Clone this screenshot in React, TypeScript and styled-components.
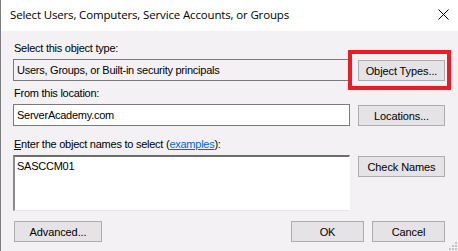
import React from 'react'
import styled, { createGlobalStyle } from 'styled-components'

const GlobalStyle = createGlobalStyle`
  html, body {
    margin: 0;
    padding: 0;
    background: #f4f1f4;
  }
`

const Window = styled.div`
  position: relative;
  width: 458px;
  height: 251px;
  box-sizing: border-box;
  border-left: 1px solid #7d7d7d;
  background: #f4f1f4;
  display: flex;
  flex-direction: column;
  font-family: 'Liberation Sans', Arial, sans-serif;
  font-size: 11px;
  letter-spacing: -0.25px;
  color: #000;
  overflow: hidden;
`

const TitleBar = styled.div`
  height: 31px;
  flex: none;
  background: #fff;
  display: flex;
  align-items: center;
  justify-content: space-between;
  padding: 0 9px 0 9px;
  letter-spacing: normal;
  .title {
    font-family: 'Open Sans', 'Noto Sans', sans-serif;
    font-size: 11.5px;
    letter-spacing: -0.15px;
    margin-top: -2px;
  }
`

const CloseIcon = styled.svg`
  width: 11px;
  height: 11px;
  margin-top: -2px;
`

const Body = styled.div`
  flex: 1;
  padding: 11px 13px 0 12px;
  display: flex;
  flex-direction: column;
`

const FieldRow = styled.div<{ $gap: number }>`
  display: grid;
  grid-template-columns: 337px 87px;
  column-gap: 8px;
  margin-bottom: ${(p) => p.$gap}px;
`

const Label = styled.div`
  grid-column: 1 / 3;
  height: 13px;
  line-height: 13px;
  margin-bottom: 4px;
  padding-left: 1px;
  .key {
    text-decoration: underline;
  }
  a {
    color: #0066cc;
    text-decoration: underline;
  }
`

const TextBox = styled.div<{ $readOnly?: boolean }>`
  height: 22px;
  box-sizing: border-box;
  border: 1px solid #7a7a7a;
  background: ${(p) => (p.$readOnly ? '#f4f1f4' : '#fff')};
  padding: 0 3px;
  line-height: 20px;
  white-space: nowrap;
`

const NamesBox = styled.div`
  height: 56px;
  box-sizing: border-box;
  border-style: solid;
  border-width: 2px 1px 1px 2px;
  border-color: #6d6d6d #ffffff #e6e3e6 #8a8a8a;
  background: #fff;
  padding: 3px 2px;
  line-height: 13px;
`

const ButtonCell = styled.div`
  position: relative;
  align-self: start;
  margin-top: 1px;
`

const Button = styled.div<{ $width?: number }>`
  width: ${(p) => (p.$width ? `${p.$width}px` : '100%')};
  height: 21px;
  box-sizing: border-box;
  border: 1px solid #adadad;
  background: #e5e3e5;
  display: flex;
  align-items: center;
  justify-content: center;
  font-size: 11px;
  letter-spacing: -0.1px;
  cursor: default;
`

const Highlight = styled.div`
  position: absolute;
  left: -10px;
  right: -6px;
  top: -10px;
  bottom: -9px;
  border: 4px solid #ed1c24;
`

const Footer = styled.div`
  margin-top: 10px;
  display: flex;
  align-items: center;
  padding-left: 1px;
  .spacer {
    flex: 1;
  }
  & > * + * {
    margin-left: 8px;
  }
`

const Grip = styled.svg`
  position: absolute;
  right: 1px;
  bottom: 1px;
  width: 8px;
  height: 8px;
`

export default function App() {
  return (
    <>
      <GlobalStyle />
      <Window>
        <TitleBar>
          <span className="title">Select Users, Computers, Service Accounts, or Groups</span>
          <CloseIcon viewBox="0 0 11 11">
            <path d="M0.5 0.5 L10.5 10.5 M10.5 0.5 L0.5 10.5" stroke="#000" strokeWidth="1" />
          </CloseIcon>
        </TitleBar>
        <Body>
          <FieldRow $gap={6}>
            <Label>Select this object type:</Label>
            <TextBox $readOnly>Users, Groups, or Built-in security principals</TextBox>
            <ButtonCell>
              <Highlight />
              <Button>Object Types...</Button>
            </ButtonCell>
          </FieldRow>
          <FieldRow $gap={12}>
            <Label>From this location:</Label>
            <TextBox>ServerAcademy.com</TextBox>
            <ButtonCell>
              <Button>Locations...</Button>
            </ButtonCell>
          </FieldRow>
          <FieldRow $gap={0}>
            <Label>
              <span className="key">E</span>nter the object names to select (<a>examples</a>):
            </Label>
            <NamesBox>SASCCM01</NamesBox>
            <ButtonCell>
              <Button>Check Names</Button>
            </ButtonCell>
          </FieldRow>
          <Footer>
            <Button $width={88}>Advanced...</Button>
            <div className="spacer" />
            <Button $width={73}>OK</Button>
            <Button $width={73}>Cancel</Button>
          </Footer>
        </Body>
        <Grip viewBox="0 0 8 8">
          {[
            [6, 0],
            [6, 3],
            [3, 3],
            [6, 6],
            [3, 6],
            [0, 6],
          ].map(([x, y], i) => (
            <rect key={i} x={x} y={y} width="2" height="2" fill="#c4c1c4" />
          ))}
        </Grip>
      </Window>
    </>
  )
}
